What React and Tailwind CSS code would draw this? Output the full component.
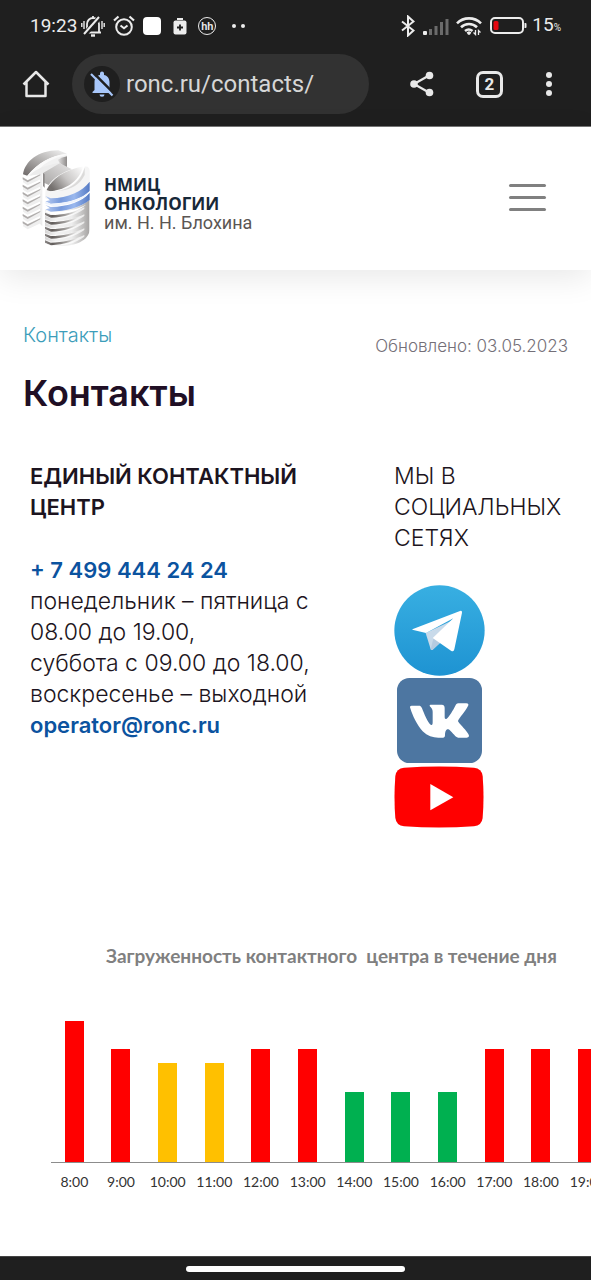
import React from "react";

const hours = [
  { time: "8:00", height: 141, color: "bg-[#ff0000]" },
  { time: "9:00", height: 113, color: "bg-[#ff0000]" },
  { time: "10:00", height: 99, color: "bg-[#ffc000]" },
  { time: "11:00", height: 99, color: "bg-[#ffc000]" },
  { time: "12:00", height: 113, color: "bg-[#ff0000]" },
  { time: "13:00", height: 113, color: "bg-[#ff0000]" },
  { time: "14:00", height: 70, color: "bg-[#00b050]" },
  { time: "15:00", height: 70, color: "bg-[#00b050]" },
  { time: "16:00", height: 70, color: "bg-[#00b050]" },
  { time: "17:00", height: 113, color: "bg-[#ff0000]" },
  { time: "18:00", height: 113, color: "bg-[#ff0000]" },
  { time: "19:00", height: 113, color: "bg-[#ff0000]" },
];

function StatusBar() {
  return (
    <div className="flex h-[52px] items-center justify-between px-[30px] text-[#ececec]">
      <div className="flex items-center">
        <span className="text-[19px] leading-6">19:23</span>
        <svg className="ml-1 size-6" viewBox="0 0 24 24" fill="none" stroke="currentColor" strokeWidth="1.8">
          <path d="M6 18V10a6 6 0 0 1 12 0v8M4 18.5h16M12 2v2" />
          <path d="M10 21.5h4" strokeWidth="2.4" />
          <path d="M4 20 19 3" stroke="#1f1f1f" strokeWidth="5" />
          <path d="M3 20 18 3" strokeWidth="2" />
          <path d="M3 7v8M.8 9v4M21 7v8M23.2 9v4" strokeWidth="1.4" />
        </svg>
        <svg className="ml-2 size-[22px]" viewBox="0 0 22 22" fill="none" stroke="currentColor" strokeWidth="2">
          <circle cx="11" cy="12" r="7.8" />
          <path d="M1 5.5 5.5 1.5M21 5.5 16.5 1.5" strokeWidth="2.2" />
          <path d="m7.5 10.5 3.5 2.8 3.5-2.8" />
        </svg>
        <span className="ml-2 size-[18px] rounded bg-white" />
        <svg className="ml-3 h-[18px] w-[14px]" viewBox="0 0 14 18">
          <rect x="4" y="1" width="6" height="2" fill="currentColor" />
          <rect x=".5" y="3.5" width="13" height="14" rx="2" fill="currentColor" />
          <path d="M7 7.5v6M4 10.5h6" stroke="#1f1f1f" strokeWidth="1.8" />
        </svg>
        <span className="ml-[11px] flex size-[18px] items-center justify-center rounded-full border border-[#ececec] text-[11px] leading-none font-semibold">hh</span>
        <span className="ml-4 flex gap-[5px]">
          <i className="size-[4px] rounded-full bg-[#ececec]" />
          <i className="size-[4px] rounded-full bg-[#ececec]" />
        </span>
      </div>
      <div className="flex items-center">
        <svg className="h-[22px] w-[14px]" viewBox="0 0 14 22" fill="none" stroke="currentColor" strokeWidth="2">
          <path d="M1 6.5 12.5 15.5 7 20.5V1.5l5.5 5L1 15.5" />
        </svg>
        <svg className="ml-2 h-[17px] w-[26px]" viewBox="0 0 26 17" fill="#6b6b6b">
          <rect x="0" y="13" width="4" height="4" rx="1" fill="#ececec" />
          <rect x="6" y="11" width="3" height="6" />
          <rect x="11.5" y="8" width="3" height="9" />
          <rect x="17" y="4" width="3" height="13" />
          <rect x="22.5" y="1" width="3" height="16" />
        </svg>
        <svg className="ml-[7px] h-[20px] w-[26px]" viewBox="0 0 26 20" fill="none" stroke="currentColor" strokeWidth="2.6">
          <path d="M1 7.3a17 17 0 0 1 24 0M5 11.3a11.5 11.5 0 0 1 16 0M9 15a6 6 0 0 1 7.5 0" />
          <path d="m13 19-2.5-3h5z" fill="currentColor" stroke="none" />
          <circle cx="13" cy="17" r="1.8" fill="currentColor" stroke="none" />
          <path d="M19.5 14v4.5l-2-2M22.5 19v-4.5l2 2" strokeWidth="1.3" />
        </svg>
        <svg className="ml-2 h-[18px] w-[37px]" viewBox="0 0 37 18">
          <rect x="1" y="1" width="32" height="15" rx="4" fill="none" stroke="currentColor" strokeWidth="2" />
          <rect x="3.5" y="4" width="5" height="9" rx="1.5" fill="#e5060f" />
          <path d="M34.5 6h1q1 0 1 1v3q0 1-1 1h-1z" fill="currentColor" />
        </svg>
        <span className="ml-[5px] text-[19px] leading-6">15<span className="text-[10px]">%</span></span>
      </div>
    </div>
  );
}

function BrowserBar() {
  return (
    <div className="flex items-center pr-[31px] pb-3 pl-[22px] text-[#e8e8e8]">
      <button aria-label="Домой" className="shrink-0">
        <svg className="size-7" viewBox="0 0 28 28" fill="none" stroke="currentColor" strokeWidth="2.5" strokeLinejoin="round">
          <path d="M1.500 14.500 14 2l12.500 12.500M4.500 12v14h19V12" />
        </svg>
      </button>
      <div className="ml-[22px] flex h-[60px] min-w-0 flex-1 items-center rounded-full bg-[#323232] pl-3">
        <button aria-label="Уведомления отключены" className="flex size-9 shrink-0 items-center justify-center rounded-full bg-[#1f1f1f] text-[#a8c7fa]">
          <svg className="h-[26px] w-6" viewBox="0 0 24 26">
            <path d="M4.500 19v-8c0-3.800 2.300-6.300 5.500-7V2.500a2 2 0 0 1 4 0V4c3.200.700 5.500 3.200 5.500 7v8l2 2v1h-19v-1z" fill="currentColor" />
            <path d="M9.500 23.500h5a2.500 2.300 0 0 1-5 0z" fill="currentColor" />
            <path d="m3 1.500 21 21" stroke="#1f1f1f" strokeWidth="2.5" />
            <path d="m1 3 21.500 21.500" stroke="currentColor" strokeWidth="2.2" />
          </svg>
        </button>
        <input
          aria-label="Адрес"
          className="ml-[6px] w-0 min-w-0 flex-1 bg-transparent text-[24px] leading-8 text-[#d6d6d6] outline-none"
          defaultValue="ronc.ru/contacts/"
        />
      </div>
      <button aria-label="Поделиться" className="ml-10 shrink-0">
        <svg className="size-[26px]" viewBox="0 0 26 26" fill="currentColor">
          <path d="M20 4.500 5 13l15 8.500" fill="none" stroke="currentColor" strokeWidth="2.2" />
          <circle cx="20.5" cy="4.5" r="3.8" /><circle cx="5" cy="13" r="3.8" /><circle cx="20.5" cy="21.5" r="3.8" />
        </svg>
      </button>
      <button aria-label="Вкладки" className="ml-[41px] flex size-[27px] shrink-0 items-center justify-center rounded-[7px] border-[3px] border-[#e8e8e8] text-[17px] leading-none font-bold">2</button>
      <button aria-label="Меню браузера" className="ml-[35px] flex w-[22px] shrink-0 flex-col items-center gap-[3px]">
        <i className="size-[6px] rounded-full bg-[#e8e8e8]" />
        <i className="size-[6px] rounded-full bg-[#e8e8e8]" />
        <i className="size-[6px] rounded-full bg-[#e8e8e8]" />
      </button>
    </div>
  );
}

function LogoMark() {
  const leftSteps = [100, 122, 144, 166, 188, 210, 232];
  const rightSteps = [204, 225, 246, 267, 287];
  return (
    <svg className="h-[105px] w-[85px] shrink-0" viewBox="0 0 255 315" aria-hidden="true">
      <defs>
        <linearGradient id="roof" x1="0" x2="1" y1="1" y2="0">
          <stop offset="0" stopColor="#6e6968" /><stop offset=".55" stopColor="#b9b7b6" /><stop offset="1" stopColor="#f5f5f5" />
        </linearGradient>
        <linearGradient id="roofEnd" x1="0" x2="1">
          <stop offset="0" stopColor="#e6e5e5" /><stop offset="1" stopColor="#8e8b8a" />
        </linearGradient>
        <linearGradient id="panel" x1="0" x2="1" y1="1" y2="0">
          <stop offset="0" stopColor="#a8a6a5" /><stop offset="1" stopColor="#e6e5e5" />
        </linearGradient>
        <linearGradient id="wall" x1="0" x2="1">
          <stop offset="0" stopColor="#d5d4d4" /><stop offset=".25" stopColor="#f2f2f2" /><stop offset=".6" stopColor="#ededed" /><stop offset="1" stopColor="#a5a3a2" />
        </linearGradient>
        <linearGradient id="groove" x1="0" x2="1">
          <stop offset="0" stopColor="#8b8786" /><stop offset=".2" stopColor="#625d5b" /><stop offset=".6" stopColor="#aaa7a5" /><stop offset="1" stopColor="#dddddd" stopOpacity="0" />
        </linearGradient>
        <linearGradient id="blue" x1="0" x2="1">
          <stop offset="0" stopColor="#b5c9f0" /><stop offset=".35" stopColor="#7699db" /><stop offset=".65" stopColor="#9ab8ee" /><stop offset="1" stopColor="#557ac4" />
        </linearGradient>
        <linearGradient id="bowl" x1="0" x2="1" y1=".6" y2="0">
          <stop offset="0" stopColor="#74706e" /><stop offset=".45" stopColor="#c9c7c6" /><stop offset="1" stopColor="#ffffff" />
        </linearGradient>
        <clipPath id="drum">
          <path d="M90 140h134v112c0 28-32 50-82 51h-31l-21-9z" />
        </clipPath>
      </defs>
      <path d="M24 88C30 50 68 16 130 16l26 10c-50 6-88 28-119 66z" fill="url(#roof)" />
      <path d="M37 92c31-38 69-60 119-66v5C112 40 80 60 60 88l-23 8z" fill="#fafafa" />
      <path d="M60 88c20-30 52-50 96-58v42l-20-15-56 32z" fill="#f1f1f1" />
      <path d="M128 44q14-7 28-10v36l-22-16z" fill="url(#roofEnd)" />
      <path d="M42 92c24-22 50-32 94-38L82 84v160l-7-8V88z" fill="#ececec" />
      {leftSteps.map((y) => (
        <g key={y}>
          <path d={`M24 ${y - 3}l14 8 42-20v16l-42 20-14-9z`} fill="#efefef" />
          <path d={`M23 ${y - 3}l15 9 38-18v3L38 ${y + 12}l-15-9z`} fill="#b0adac" />
        </g>
      ))}
      <path d="M84 84l50-29 37 18c-30 10-54 25-70 47l-17-8z" fill="url(#panel)" />
      <path d="M84 84l5 4v40l-5-5z" fill="#8d8a89" />
      <path d="M95 134c16-31 49-58 110-70-13 46-53 72-107 76z" fill="url(#bowl)" />
      <path d="M92 134l14 5c50-3 88-24 103-74 8-3 15 2 15 13v50c-20 26-60 38-118 38l-16-7z" fill="#f5f5f5" />
      <path d="M130 138c40-8 68-30 79-70v22c-14 28-38 44-79 48z" fill="#c9c8c7" opacity=".6" />
      <g clipPath="url(#drum)">
        <path d="M90 194l16 6c50-1 92-14 118-36v150H90z" fill="url(#wall)" />
        {rightSteps.map((y) => (
          <g key={y}>
            <path d={`M90 ${y + 8}l18 8c40 0 72-8 100-28v-5c-26 13-60 20-100 20l-18-7z`} fill="#fff" opacity=".7" />
            <path d={`M90 ${y - 1}l17 7c38-1 66-7 93-22-20 18-50 28-92 30l-18-8z`} fill="url(#groove)" />
          </g>
        ))}
      </g>
      <path d="M91 153l16 7c54-2 94-20 117-50v28c-22 22-60 34-100 37l-17 1-16-7 14-3z" fill="url(#blue)" />
      <path d="M91 180l16 6c54-2 94-16 117-43v22c-26 22-70 34-117 35l-16-7 14-3z" fill="url(#blue)" />
      <path d="M91 170l16 7c54-2 94-14 117-38v4c-26 26-68 38-110 40l-23-7z" fill="#eef3fc" />
      <path d="M91 195l16 6c46-1 78-7 106-22-22 20-56 28-104 29l-18-7z" fill="#fff" />
    </svg>
  );
}

function SiteHeader() {
  return (
    <header className="relative flex items-center justify-between bg-white pt-[18px] pr-11 pb-5 pl-[15px] shadow-[0_8px_30px_rgba(0,0,0,0.09)]">
      <a href="#home" className="flex items-center">
        <LogoMark />
        <span className="ml-1 pt-3 text-[18px] leading-[19px] text-[#172838]">
          <strong className="block font-['Open_Sans',sans-serif] text-[17px] font-bold">НМИЦ</strong>
          <strong className="block font-['Open_Sans',sans-serif] text-[17px] font-bold">ОНКОЛОГИИ</strong>
          <span className="block text-[#5b5653]">им. Н. Н. Блохина</span>
        </span>
      </a>
      <button aria-label="Меню" className="flex w-[39px] flex-col gap-[9px] px-px">
        <i className="h-[3px] rounded-full bg-[#808080]" />
        <i className="h-[3px] rounded-full bg-[#808080]" />
        <i className="h-[3px] rounded-full bg-[#808080]" />
      </button>
    </header>
  );
}

function SocialLinks() {
  return (
    <div className="mt-[31px] flex flex-col items-start">
      <a href="#telegram" aria-label="Telegram">
        <svg className="size-[91px]" viewBox="0 0 273 273">
          <defs>
            <linearGradient id="tg" x1="0" x2="0" y1="0" y2="1">
              <stop offset="0" stopColor="#38afe2" /><stop offset="1" stopColor="#1e93d2" />
            </linearGradient>
          </defs>
          <circle cx="136.5" cy="136.5" r="135.5" fill="url(#tg)" />
          <path d="M95 144l15 49q2 4 6 1l25-23 35-65z" fill="#c8daea" />
          <path d="M110 193l9-36 57-52-35 66-25 23q-4 3-6-1z" fill="#b5cbe0" />
          <path d="M57 132L198 78q7-2 6 5l-23 110q-2 9-10 4l-55-38 62-59-82 44-38-9q-6-1-1-3z" fill="#fff" />
        </svg>
      </a>
      <a href="#vk" aria-label="ВКонтакте" className="mt-[2px] ml-[3px]">
        <svg className="size-[85px]" viewBox="0 0 255 255">
          <rect width="255" height="255" rx="37" fill="#4d76a1" />
          <path d="M124 179h14c4 0 6-3 6-7 0-15 6-24 16-14 13 13 17 21 27 21h22c7 0 9-5 5-11-5-9-23-27-29-35-3-4-2-6 1-10 6-8 25-32 28-41 1-4-1-6-6-6h-24c-5 0-7 3-9 7-5 11-20 35-26 39-4 2-6 0-6-6V91c0-7-2-11-9-11h-32c-3 0-5 2-4 4 5 6 9 8 9 18v31c0 8-2 10-6 7-10-7-19-33-26-49-3-7-5-8-10-8H44c-5 0-6 3-4 8 6 20 20 51 37 69 14 14 31 19 47 19z" fill="#fff" />
        </svg>
      </a>
      <a href="#youtube" aria-label="YouTube" className="mt-[3px]">
        <svg className="h-[62px] w-[90px]" viewBox="0 0 270 186">
          <path d="M30 5Q135-2 240 5q23 2 26 25 5 63 0 126-3 23-26 25-105 7-210 0-23-2-26-25-5-63 0-126Q7 7 30 5z" fill="#f00" />
          <path d="M109 54v79l69-39.500z" fill="#fff" />
        </svg>
      </a>
    </div>
  );
}

function LoadChart() {
  return (
    <section className="mt-[116px] overflow-hidden font-['Lato','Open_Sans',sans-serif]">
      <h2 className="pl-[106px] text-[19px] leading-6 font-bold whitespace-nowrap text-[#808080]">
        Загруженность контактного&nbsp; центра в течение дня
      </h2>
      <div className="mt-[53px] ml-[51px] w-[560px]">
        <div className="grid grid-cols-12 items-end border-b border-[#8c8c8c]">
          {hours.map((h) => (
            <div key={h.time} className={`mx-auto w-[19px] ${h.color}`} style={{ height: h.height }} />
          ))}
        </div>
        <div className="mt-[9px] grid grid-cols-12 text-center text-[14px] leading-5 text-[#333]">
          {hours.map((h) => (
            <span key={h.time}>{h.time}</span>
          ))}
        </div>
      </div>
    </section>
  );
}

export default function App() {
  return (
    <div className="flex min-h-screen flex-col overflow-hidden bg-white font-['Roboto',sans-serif]">
      <div className="border-b border-[#777] bg-[#1f1f1f]">
        <StatusBar />
        <div className="pt-[2px]">
          <BrowserBar />
        </div>
      </div>
      <SiteHeader />
      <main className="pt-[50px] font-['Inter',sans-serif] text-[#1c1420]">
        <div className="flex items-start justify-between px-[23px]">
          <a href="#contacts" className="text-[20px] leading-[30px] font-light text-[#3c9dba]">Контакты</a>
          <p className="pt-[14px] text-[17px] leading-6 font-light text-[#746f78]">Обновлено: 03.05.2023</p>
        </div>
        <h1 className="mt-[10px] px-[23px] text-[36px] leading-[50px] font-semibold text-[#200f25]">Контакты</h1>
        <div className="mt-[43px] grid grid-cols-[364px_1fr] pl-[30px] text-[23px] leading-[31px] font-light">
          <div>
            <h2 className="pr-[60px] text-[22px] leading-[31px] font-semibold">ЕДИНЫЙ КОНТАКТНЫЙ ЦЕНТР</h2>
            <p className="mt-8">
              <a href="tel:+74994442424" className="text-[22px] font-semibold text-[#0b539f]">+ 7 499 444 24 24</a>
              <br />понедельник – пятница с
              <br />08.00 до 19.00,
              <br />суббота с 09.00 до 18.00,
              <br />воскресенье – выходной
              <br /><a href="mailto:operator@ronc.ru" className="text-[22px] font-semibold text-[#0b539f]">operator@ronc.ru</a>
            </p>
          </div>
          <div>
            <h2>МЫ В<br />СОЦИАЛЬНЫХ СЕТЯХ</h2>
            <SocialLinks />
          </div>
        </div>
        <LoadChart />
      </main>
      <div className="mt-auto flex h-6 items-center justify-center border-t border-[#444] bg-[#1f1f1f]">
        <span className="h-[6px] w-[37%] rounded-full bg-white" />
      </div>
    </div>
  );
}
